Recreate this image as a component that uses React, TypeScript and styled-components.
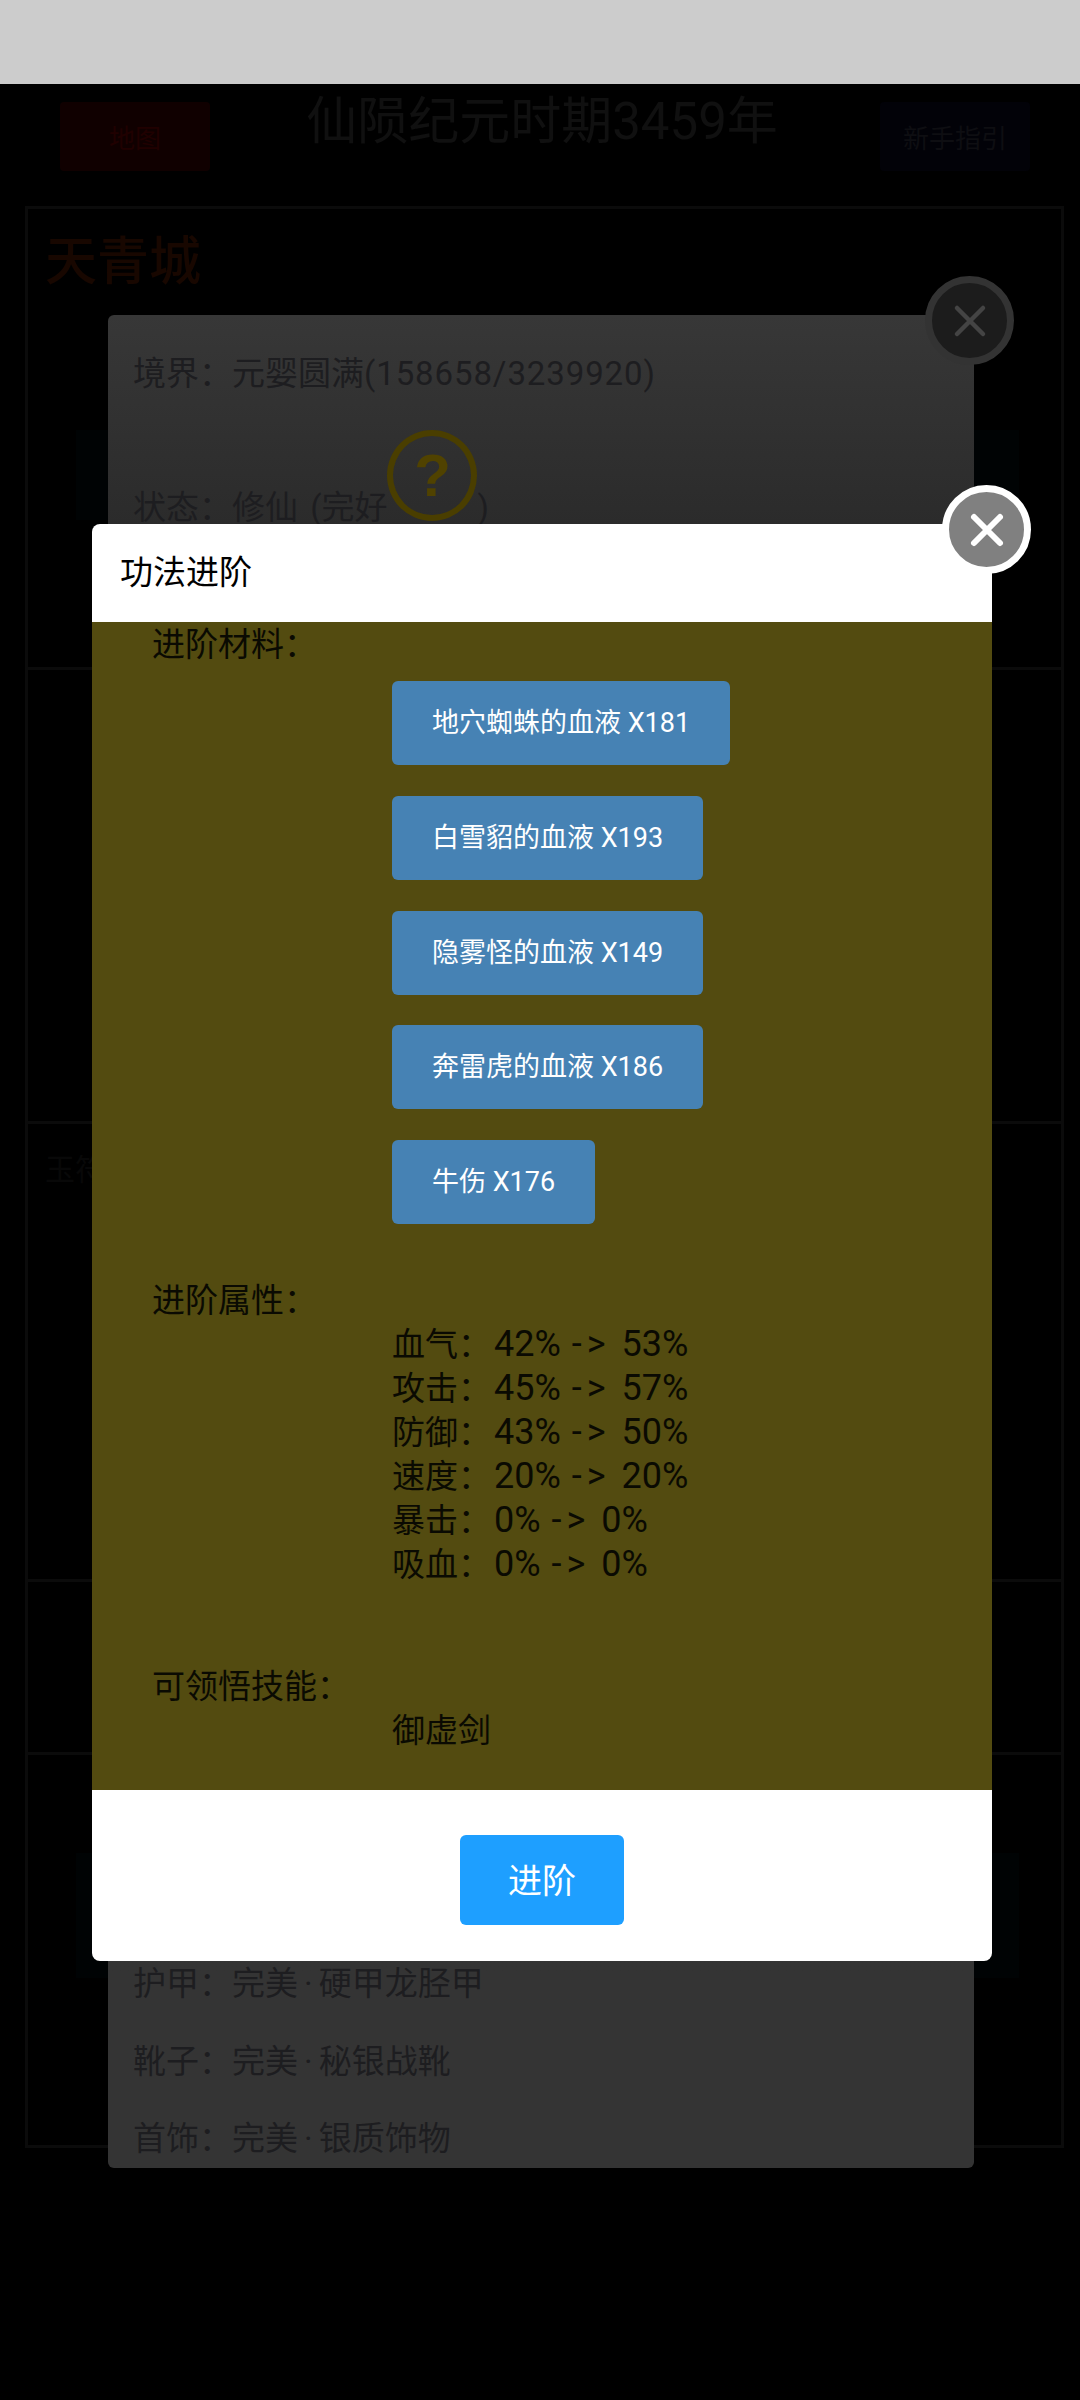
import React from "react";
import styled, { createGlobalStyle } from "styled-components";

const Global = createGlobalStyle`
  html, body { margin: 0; padding: 0; background: #000; }
  body { font-family: Roboto, "Noto Sans CJK SC", sans-serif; }
  * { box-sizing: border-box; }
`;

const Screen = styled.div`
  position: relative;
  width: 1080px;
  height: 2400px;
  overflow: hidden;
  background: #000;
`;

const StatusBar = styled.div`
  height: 84px;
  background: #cccccc;
`;

const TopBar = styled.header`
  height: 122px;
  display: flex;
  justify-content: space-between;
  align-items: flex-start;
  padding: 18px 50px 0 60px;
`;

const TopButton = styled.div<{ $bg: string; $fg: string }>`
  width: 150px;
  height: 69px;
  display: flex;
  align-items: center;
  justify-content: center;
  font-size: 26px;
  border-radius: 4px;
  background: ${(p) => p.$bg};
  color: ${(p) => p.$fg};
`;

const WorldTitle = styled.h1`
  margin: -10px 0 0 -6px;
  font-size: 51px;
  line-height: 60px;
  font-weight: 400;
  color: #101010;
  white-space: nowrap;
`;

const Panels = styled.main`
  margin: 0 16px 0 25px;
  height: 1942px;
  border: 3px solid #0b0b0b;
  display: flex;
  flex-direction: column;
`;

const Panel = styled.section<{ $h: number }>`
  height: ${(p) => p.$h}px;
  flex: none;
  border-bottom: 3px solid #0b0b0b;
  padding: 26px 17px 0;
  &:last-child { border-bottom: 0; }
`;

const CityName = styled.h2`
  margin: 0;
  font-size: 52px;
  line-height: 56px;
  font-weight: 500;
  color: #180700;
`;

const FaintLabel = styled.div`
  font-size: 30px;
  line-height: 40px;
  color: #080808;
`;

const TealStrip = styled.div<{ $top: number; $h: number }>`
  margin: ${(p) => p.$top}px 25px 0 31px;
  height: ${(p) => p.$h}px;
  background: #000304;
`;

const Sheet = styled.div`
  position: absolute;
  left: 108px;
  top: 315px;
  width: 866px;
  height: 1853px;
  background: linear-gradient(180deg, #373737 0, #2b2b2b 210px, #343434 1660px);
  border-radius: 6px;
  padding: 37px 25px 7px;
  display: flex;
  flex-direction: column;
  justify-content: space-between;
  font-size: 33px;
  line-height: 44px;
  color: #1d1d20;
`;

const SheetGroup = styled.div`
  display: flex;
  flex-direction: column;
`;

const SheetTail = styled(SheetGroup)`
  gap: 33.5px;
`;

const SpacedNumbers = styled.span`
  letter-spacing: 0.9px;
`;

const QualityDot = styled.span`
  margin: 0 6px;
`;

const StatusRow = styled.div`
  display: flex;
  align-items: flex-end;
  margin-top: 34px;
  word-spacing: 4px;
`;

const HelpBadge = styled.span`
  flex: none;
  width: 90px;
  height: 91px;
  margin-bottom: 9px;
  border: 6px solid #4a3e00;
  border-radius: 50%;
  display: flex;
  align-items: center;
  justify-content: center;
  font-family: "Liberation Sans", sans-serif;
  font-size: 60px;
  font-weight: 700;
  line-height: 1;
  color: #504200;
`;

const CloseButton = styled.div<{ $front?: boolean }>`
  position: absolute;
  width: 89px;
  height: 89px;
  border-radius: 50%;
  display: flex;
  align-items: center;
  justify-content: center;
  left: ${(p) => (p.$front ? 942 : 925)}px;
  top: ${(p) => (p.$front ? 485 : 276)}px;
  background: ${(p) => (p.$front ? "#808080" : "#1c1c1c")};
  border: 7px solid ${(p) => (p.$front ? "#ffffff" : "#333333")};
`;

const Dialog = styled.div`
  position: absolute;
  left: 92px;
  top: 524px;
  width: 900px;
  height: 1437px;
  border-radius: 8px;
  overflow: hidden;
  background: #fff;
  display: flex;
  flex-direction: column;
`;

const DialogHeader = styled.div`
  height: 98px;
  flex: none;
  padding: 27px 28px 0;
  font-size: 33px;
  line-height: 44px;
  color: #000;
`;

const DialogBody = styled.div`
  height: 1168px;
  flex: none;
  background: #534b10;
  padding: 1px 0 0 60px;
  font-size: 33px;
  line-height: 44px;
  color: #0a0a02;
`;

const Indented = styled.div`
  padding-left: 240px;
`;

const Materials = styled(Indented)`
  display: flex;
  flex-direction: column;
  align-items: flex-start;
  gap: 30.75px;
  margin-top: 14px;
  margin-bottom: 55px;
`;

const MaterialButton = styled.div`
  height: 84px;
  padding: 0 40px;
  display: flex;
  align-items: center;
  background: #4682b4;
  border-radius: 6px;
  font-size: 27px;
  color: #fff;
  white-space: nowrap;
`;

const Attributes = styled(Indented)`
  margin-bottom: 78px;
`;

const AttributeRow = styled.div`
  height: 44px;
`;

const AttributeValue = styled.span`
  margin-left: 3px;
  font-size: 36px;
  line-height: 1;
  word-spacing: 2px;
`;

const Arrow = styled.span`
  letter-spacing: 5px;
`;

const DialogFooter = styled.div`
  flex: 1;
  display: flex;
  align-items: flex-start;
  justify-content: center;
  padding-top: 45px;
`;

const AdvanceButton = styled.div`
  width: 164px;
  height: 90px;
  padding-bottom: 4px;
  display: flex;
  align-items: center;
  justify-content: center;
  background: #1e9fff;
  border-radius: 6px;
  font-size: 34px;
  color: #fff;
`;

const CloseIcon = ({ color, width }: { color: string; width: number }) => (
  <svg width="36" height="36" viewBox="0 0 36 36" fill="none" stroke={color} strokeWidth={width} strokeLinecap="round">
    <path d="M5 5 L31 31 M31 5 L5 31" />
  </svg>
);

const materials = ["地穴蜘蛛的血液 X181", "白雪貂的血液 X193", "隐雾怪的血液 X149", "奔雷虎的血液 X186", "牛伤 X176"];
const attributes = [
  ["血气：", "42%", "53%"],
  ["攻击：", "45%", "57%"],
  ["防御：", "43%", "50%"],
  ["速度：", "20%", "20%"],
  ["暴击：", "0%", "0%"],
  ["吸血：", "0%", "0%"],
];
const gear = [
  ["护甲：", "硬甲龙胫甲"],
  ["靴子：", "秘银战靴"],
  ["首饰：", "银质饰物"],
];

export default function App() {
  return (
    <Screen>
      <Global />
      <StatusBar />
      <TopBar>
        <TopButton $bg="#100000" $fg="#200000">地图</TopButton>
        <WorldTitle>仙陨纪元时期3459年</WorldTitle>
        <TopButton $bg="#020208" $fg="#0e0e12">新手指引</TopButton>
      </TopBar>
      <Panels>
        <Panel $h={461}>
          <CityName>天青城</CityName>
          <TealStrip $top={139} $h={90} />
        </Panel>
        <Panel $h={454} />
        <Panel $h={458}><FaintLabel>玉符</FaintLabel></Panel>
        <Panel $h={173} />
        <Panel $h={390}>
          <TealStrip $top={72} $h={125} />
        </Panel>
      </Panels>

      <Sheet>
        <SheetGroup>
          <div>境界：元婴圆满<SpacedNumbers>(158658/3239920)</SpacedNumbers></div>
          <StatusRow>
            <span>状态：修仙 (完好</span>
            <HelpBadge>?</HelpBadge>
            <span>)</span>
          </StatusRow>
        </SheetGroup>
        <SheetTail>
          {gear.map(([slot, item]) => (
            <div key={slot}>{slot}完美<QualityDot>·</QualityDot>{item}</div>
          ))}
        </SheetTail>
      </Sheet>
      <CloseButton><CloseIcon color="#444444" width={4.5} /></CloseButton>

      <Dialog>
        <DialogHeader>功法进阶</DialogHeader>
        <DialogBody>
          <div>进阶材料：</div>
          <Materials>
            {materials.map((m) => <MaterialButton key={m}>{m}</MaterialButton>)}
          </Materials>
          <div>进阶属性：</div>
          <Attributes>
            {attributes.map(([label, from, to]) => (
              <AttributeRow key={label}>
                {label}
                <AttributeValue>{from} <Arrow>-&gt;</Arrow> {to}</AttributeValue>
              </AttributeRow>
            ))}
          </Attributes>
          <div>可领悟技能：</div>
          <Indented>御虚剑</Indented>
        </DialogBody>
        <DialogFooter>
          <AdvanceButton>进阶</AdvanceButton>
        </DialogFooter>
      </Dialog>
      <CloseButton $front><CloseIcon color="#ffffff" width={6} /></CloseButton>
    </Screen>
  );
}
